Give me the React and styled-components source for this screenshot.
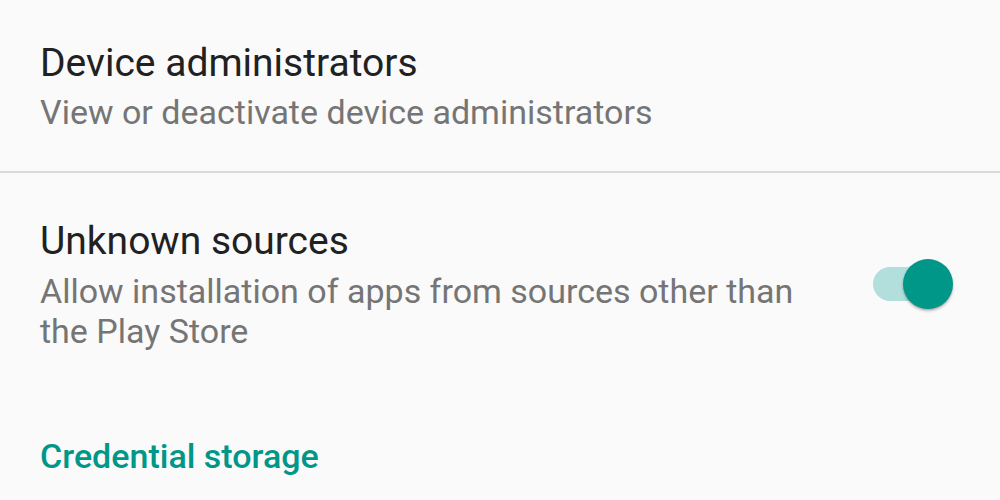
import React from "react";
import styled, { createGlobalStyle } from "styled-components";

const GlobalStyle = createGlobalStyle`
  html, body {
    margin: 0;
    padding: 0;
    background: #fafafa;
  }
  body {
    font-family: Roboto, "Noto Sans", sans-serif;
    -webkit-font-smoothing: antialiased;
  }
`;

const Screen = styled.div`
  width: 1000px;
  height: 500px;
  overflow: hidden;
  background: #fafafa;
  display: flex;
  flex-direction: column;
`;

const Pref = styled.div`
  display: flex;
  align-items: center;
  padding: ${(p) => p.pad};
`;

const Texts = styled.div`
  flex: 1;
  display: flex;
  flex-direction: column;
  padding-right: ${(p) => (p.withWidget ? "30px" : "0")};
`;

const Title = styled.div`
  font-size: 39px;
  line-height: 48px;
  color: #212121;
`;

const Summary = styled.div`
  font-size: 34px;
  line-height: 40px;
  color: #757575;
  margin-top: ${(p) => p.gap || "5px"};
`;

const Divider = styled.div`
  height: 2px;
  background: #dadada;
  margin-top: 1px;
`;

const SwitchBox = styled.div`
  position: relative;
  width: 90px;
  height: 50px;
  margin-right: 49px;
  flex-shrink: 0;
`;

const Track = styled.div`
  position: absolute;
  left: 12px;
  right: 0;
  top: 50%;
  height: 34px;
  margin-top: -17px;
  border-radius: 17px;
  background: #b2dfdb;
`;

const Thumb = styled.div`
  position: absolute;
  right: -2px;
  top: 0;
  width: 50px;
  height: 50px;
  border-radius: 50%;
  background: #009688;
  box-shadow: 0 2px 3px rgba(0, 0, 0, 0.25), 0 1px 1px rgba(0, 0, 0, 0.12);
`;

const Category = styled.div`
  font-size: 34px;
  line-height: 40px;
  font-weight: 500;
  color: #009688;
  padding: 0 40px;
  margin-top: ${(p) => p.top};
`;

const Switch = () => (
  <SwitchBox>
    <Track />
    <Thumb />
  </SwitchBox>
);

export default function App() {
  return (
    <Screen>
      <GlobalStyle />
      <Pref pad="39px 40px 38px">
        <Texts>
          <Title>Device administrators</Title>
          <Summary>View or deactivate device administrators</Summary>
        </Texts>
      </Pref>
      <Divider />
      <Pref pad="44px 0 0 40px">
        <Texts withWidget>
          <Title>Unknown sources</Title>
          <Summary gap="6px">
            Allow installation of apps from sources other than the Play Store
          </Summary>
        </Texts>
        <Switch />
      </Pref>
      <Category top="85px">Credential storage</Category>
    </Screen>
  );
}
